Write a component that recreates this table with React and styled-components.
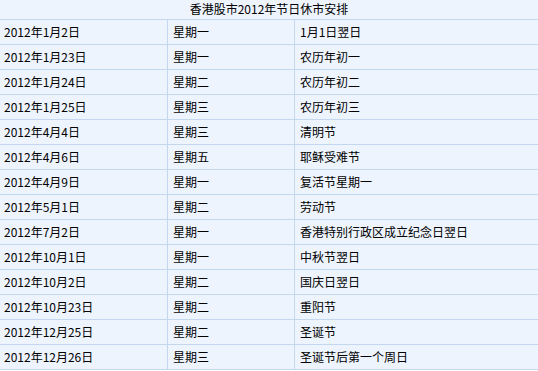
import React from "react";
import styled, { createGlobalStyle } from "styled-components";

const Global = createGlobalStyle`
  html, body { margin: 0; padding: 0; background: #ffffff; }
  body { font-family: "Noto Sans CJK SC", "Liberation Sans", sans-serif; }
`;

const Wrap = styled.div`
  width: 538px;
  background: #eef4fd;
  color: #000;
  font-size: 12px;
  line-height: 1;
`;

const Title = styled.div`
  height: 19px;
  border-bottom: 1px solid #c3d7ef;
  display: flex;
  align-items: center;
  justify-content: center;
  padding-bottom: 1px;
  box-sizing: border-box;
  height: 20px;
`;

const Row = styled.div`
  display: grid;
  grid-template-columns: 167px 1px 126px 1px 1fr;
  height: 25px;
  border-bottom: 1px solid #c3d7ef;
  box-sizing: border-box;
`;

const Cell = styled.div`
  display: flex;
  align-items: center;
  padding-left: ${(p) => p.$pad}px;
  white-space: nowrap;
`;

const Divider = styled.div`
  background: #c3d7ef;
`;

const data = [
  ["2012年1月2日", "星期一", "1月1日翌日"],
  ["2012年1月23日", "星期一", "农历年初一"],
  ["2012年1月24日", "星期二", "农历年初二"],
  ["2012年1月25日", "星期三", "农历年初三"],
  ["2012年4月4日", "星期三", "清明节"],
  ["2012年4月6日", "星期五", "耶稣受难节"],
  ["2012年4月9日", "星期一", "复活节星期一"],
  ["2012年5月1日", "星期二", "劳动节"],
  ["2012年7月2日", "星期一", "香港特别行政区成立纪念日翌日"],
  ["2012年10月1日", "星期一", "中秋节翌日"],
  ["2012年10月2日", "星期二", "国庆日翌日"],
  ["2012年10月23日", "星期二", "重阳节"],
  ["2012年12月25日", "星期二", "圣诞节"],
  ["2012年12月26日", "星期三", "圣诞节后第一个周日"],
];

export default function App() {
  return (
    <>
      <Global />
      <Wrap>
        <Title>香港股市2012年节日休市安排</Title>
        {data.map(([d, w, n]) => (
          <Row key={d}>
            <Cell $pad={4}>{d}</Cell>
            <Divider />
            <Cell $pad={5}>{w}</Cell>
            <Divider />
            <Cell $pad={5}>{n}</Cell>
          </Row>
        ))}
      </Wrap>
    </>
  );
}
